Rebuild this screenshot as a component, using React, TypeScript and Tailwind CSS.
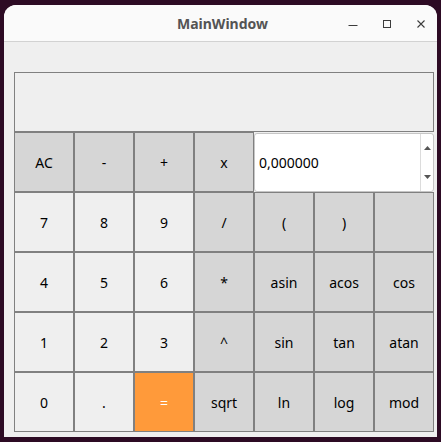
import React from 'react'

type Key = {
  label: string
  kind: 'op' | 'num' | 'eq'
}

const row1: Key[] = [
  { label: 'AC', kind: 'op' },
  { label: '-', kind: 'op' },
  { label: '+', kind: 'op' },
  { label: 'x', kind: 'op' },
]

const rows: Key[][] = [
  [
    { label: '7', kind: 'num' },
    { label: '8', kind: 'num' },
    { label: '9', kind: 'num' },
    { label: '/', kind: 'op' },
    { label: '(', kind: 'op' },
    { label: ')', kind: 'op' },
    { label: '', kind: 'op' },
  ],
  [
    { label: '4', kind: 'num' },
    { label: '5', kind: 'num' },
    { label: '6', kind: 'num' },
    { label: '*', kind: 'op' },
    { label: 'asin', kind: 'op' },
    { label: 'acos', kind: 'op' },
    { label: 'cos', kind: 'op' },
  ],
  [
    { label: '1', kind: 'num' },
    { label: '2', kind: 'num' },
    { label: '3', kind: 'num' },
    { label: '^', kind: 'op' },
    { label: 'sin', kind: 'op' },
    { label: 'tan', kind: 'op' },
    { label: 'atan', kind: 'op' },
  ],
  [
    { label: '0', kind: 'num' },
    { label: '.', kind: 'num' },
    { label: '=', kind: 'eq' },
    { label: 'sqrt', kind: 'op' },
    { label: 'ln', kind: 'op' },
    { label: 'log', kind: 'op' },
    { label: 'mod', kind: 'op' },
  ],
]

const keyClass = (kind: Key['kind']) => {
  if (kind === 'eq') return 'bg-[#ff9a3a] text-white'
  if (kind === 'num') return 'bg-[#efefef] text-black'
  return 'bg-[#d6d6d6] text-black'
}

const CalcKey = ({ k }: { k: Key }) => (
  <button
    className={`h-[60px] w-[60px] border border-[#808080] text-[14px] flex items-center justify-center ${keyClass(k.kind)}`}
  >
    {k.label}
  </button>
)

export default function App() {
  return (
    <div
      className="w-[441px] h-[442px] bg-[#2d0b24] pt-[5px] pl-[4px] overflow-hidden"
      style={{ fontFamily: '"Noto Sans", "Open Sans", sans-serif' }}
    >
      <div className="w-[433px] h-[432px] bg-[#efefef] rounded-t-[12px] flex flex-col overflow-hidden">
        {/* Title bar */}
        <div className="relative h-[37px] bg-[#fafafa] border-b border-[#d2d2d2] flex items-center justify-center shrink-0">
          <span className="text-[14px] font-bold text-[#545454] ml-[4px]">MainWindow</span>
          <div className="absolute right-[11px] top-[14px] flex items-center gap-[24px]">
            <svg width="10" height="10" viewBox="0 0 10 10">
              <path d="M0.5 6.5 H9.5" stroke="#3c3c3c" strokeWidth="1" />
            </svg>
            <svg width="10" height="10" viewBox="0 0 10 10">
              <rect x="1.5" y="1.5" width="7" height="7" fill="none" stroke="#3c3c3c" strokeWidth="1" />
            </svg>
            <svg width="10" height="10" viewBox="0 0 10 10">
              <path d="M1.5 1.5 L8.5 8.5 M8.5 1.5 L1.5 8.5" stroke="#3c3c3c" strokeWidth="1.1" />
            </svg>
          </div>
        </div>

        {/* Body */}
        <div className="pl-[10px] pt-[30px]">
          <div className="w-[420px] h-[60px] border border-[#808080] bg-[#efefef]" />
          <div className="flex">
            {row1.map((k) => (
              <CalcKey key={k.label} k={k} />
            ))}
            <div className="w-[180px] h-[59px] mt-[1px] bg-white border border-[#c6c6c6] rounded-[3px] flex">
              <div className="flex-1 flex items-center pl-[4px] text-[14px] text-black">0,000000</div>
              <div className="w-[13px] border-l border-[#dcdcdc] flex flex-col justify-between items-center py-[12px]">
                <svg width="7" height="4" viewBox="0 0 7 4">
                  <path d="M0 4 L3.5 0 L7 4 Z" fill="#555" />
                </svg>
                <svg width="7" height="4" viewBox="0 0 7 4">
                  <path d="M0 0 L7 0 L3.5 4 Z" fill="#555" />
                </svg>
              </div>
            </div>
          </div>
          {rows.map((r, i) => (
            <div key={i} className="flex">
              {r.map((k, j) => (
                <CalcKey key={j} k={k} />
              ))}
            </div>
          ))}
        </div>
      </div>
    </div>
  )
}
